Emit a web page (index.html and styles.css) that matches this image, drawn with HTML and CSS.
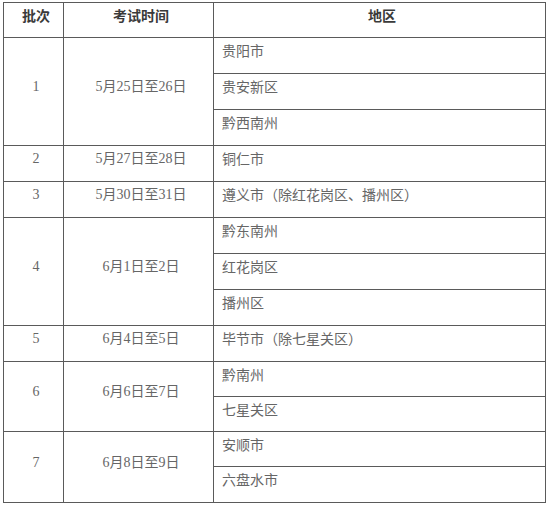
FILE: index.html
```html
<!DOCTYPE html>
<html lang="zh-CN">
<head>
<meta charset="utf-8">
<link rel="stylesheet" href="styles.css">
</head>
<body>
<table class="schedule">
  <colgroup>
    <col class="c-batch">
    <col class="c-time">
    <col class="c-area">
  </colgroup>
  <thead>
    <tr class="head">
      <th>批次</th>
      <th>考试时间</th>
      <th>地区</th>
    </tr>
  </thead>
  <tbody>
    <tr class="r36"><td class="mid" rowspan="3">1</td><td class="mid" rowspan="3">5月25日至26日</td><td class="area">贵阳市</td></tr>
    <tr class="r36"><td class="area">贵安新区</td></tr>
    <tr class="r36"><td class="area">黔西南州</td></tr>
    <tr class="r36"><td class="mid">2</td><td class="mid">5月27日至28日</td><td class="area">铜仁市</td></tr>
    <tr class="r36"><td class="mid">3</td><td class="mid">5月30日至31日</td><td class="area">遵义市（除红花岗区、播州区）</td></tr>
    <tr class="r36"><td class="mid" rowspan="3">4</td><td class="mid" rowspan="3">6月1日至2日</td><td class="area">黔东南州</td></tr>
    <tr class="r36"><td class="area">红花岗区</td></tr>
    <tr class="r36"><td class="area">播州区</td></tr>
    <tr class="r36"><td class="mid">5</td><td class="mid">6月4日至5日</td><td class="area">毕节市（除七星关区）</td></tr>
    <tr class="r35"><td class="mid" rowspan="2">6</td><td class="mid" rowspan="2">6月6日至7日</td><td class="area">黔南州</td></tr>
    <tr class="r35"><td class="area">七星关区</td></tr>
    <tr class="r35"><td class="mid" rowspan="2">7</td><td class="mid" rowspan="2">6月8日至9日</td><td class="area">安顺市</td></tr>
    <tr class="r36"><td class="area">六盘水市</td></tr>
  </tbody>
</table>
</body>
</html>
```

FILE: styles.css
```css
html, body {
  margin: 0;
  padding: 0;
  background: #ffffff;
}

body {
  font-family: "Liberation Serif", "Noto Sans CJK SC", serif;
  font-size: 14px;
  color: #666666;
}

.schedule {
  border-collapse: collapse;
  table-layout: fixed;
  width: 542px;
  margin: 2px 0 0 3px;
}

.c-batch { width: 60px; }
.c-time { width: 150px; }
.c-area { width: 332px; }

.schedule th,
.schedule td {
  border: 1px solid #5a5a5a;
  padding: 0;
  line-height: 18px;
}

.head { height: 35px; }

.schedule th {
  color: #3a3a3a;
  font-weight: bold;
  text-align: center;
  vertical-align: middle;
  padding: 0 0 6px 5px;
}

.r36 { height: 36px; }
.r35 { height: 35px; }

.schedule .mid {
  text-align: center;
  vertical-align: middle;
  padding: 0 0 9px 5px;
}

.schedule .area {
  text-align: left;
  vertical-align: middle;
  padding: 0 0 7px 8px;
}
```
